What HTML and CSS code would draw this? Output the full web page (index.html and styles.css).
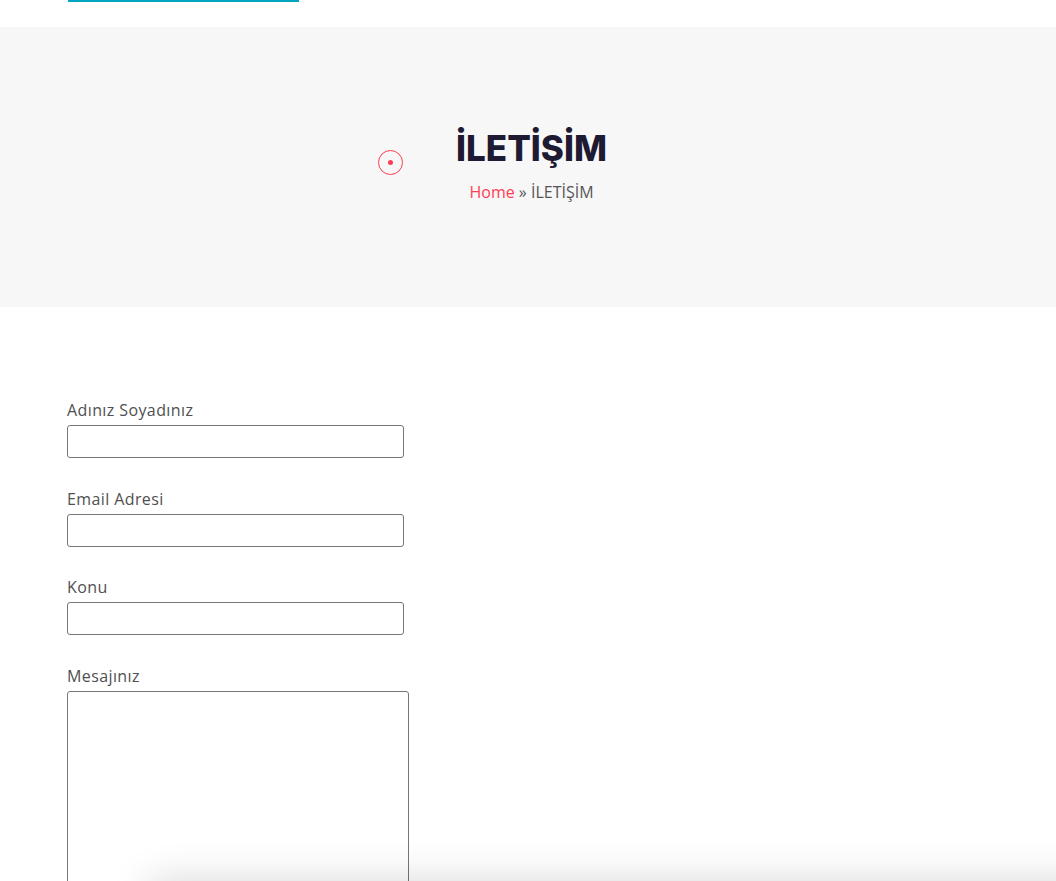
FILE: index.html
```html
<!DOCTYPE html>
<html lang="tr">
<head>
<meta charset="utf-8">
<title>İLETİŞİM</title>
<link rel="stylesheet" href="styles.css">
</head>
<body>
<header class="topbar">
  <div class="topbar-line"></div>
</header>
<section class="hero">
  <span class="hero-dot" aria-hidden="true"></span>
  <h1 class="hero-title">İLETİŞİM</h1>
  <nav class="crumbs"><a href="#" class="crumb-home">Home</a> » <span class="crumb-current">İLETİŞİM</span></nav>
</section>
<main class="content">
  <form class="contact-form">
    <div class="field">
      <label class="field-label" for="name">Adınız Soyadınız</label>
      <input class="field-input" id="name" type="text">
    </div>
    <div class="field">
      <label class="field-label" for="email">Email Adresi</label>
      <input class="field-input" id="email" type="email">
    </div>
    <div class="field">
      <label class="field-label" for="subject">Konu</label>
      <input class="field-input" id="subject" type="text">
    </div>
    <div class="field">
      <label class="field-label" for="message">Mesajınız</label>
      <textarea class="field-textarea" id="message"></textarea>
    </div>
  </form>
</main>
<div class="bottom-panel" aria-hidden="true"></div>
</body>
</html>
```
FILE: styles.css
```css
* { box-sizing: border-box; }
html, body { margin: 0; padding: 0; }
body {
  font-family: "Open Sans", "Noto Sans", sans-serif;
  background: #fff;
  color: #505050;
  overflow: hidden;
  height: 881px;
}
.topbar {
  height: 27px;
  padding-left: 68px;
}
.topbar-line {
  width: 231px;
  height: 2px;
  background: #03a5c0;
}
.hero {
  position: relative;
  height: 280px;
  background: #f7f7f7;
  display: flex;
  flex-direction: column;
  align-items: center;
  padding-top: 98px;
}
.hero-dot {
  position: absolute;
  left: 378px;
  top: 123px;
  width: 25px;
  height: 25px;
  border: 1.5px solid #ff3d52;
  border-radius: 50%;
}
.hero-dot::after {
  content: "";
  position: absolute;
  left: 50%;
  top: 50%;
  width: 5px;
  height: 5px;
  margin: -2.5px 0 0 -2.5px;
  border-radius: 50%;
  background: #ff3d52;
}
.hero-title {
  margin: 0 0 0 7px;
  font-family: "Inter", sans-serif;
  font-weight: 800;
  font-size: 35px;
  line-height: 46px;
  color: #1e1a33;
}
.crumbs {
  margin: 9px 0 0 7px;
  font-size: 16px;
  line-height: 24px;
  color: #555;
}
.crumb-home { color: #ff3d52; text-decoration: none; }
.crumb-current { color: #555; }
.content {
  padding: 91px 0 0 67px;
}
.contact-form {
  display: flex;
  flex-direction: column;
}
.field {
  display: flex;
  flex-direction: column;
  align-items: flex-start;
  margin-bottom: 28.5px;
}
.field-label {
  font-size: 16px;
  line-height: 24px;
  letter-spacing: 0.4px;
  color: #505050;
  margin-bottom: 3px;
}
.field-input {
  width: 337px;
  height: 33px;
  border: 1px solid #767676;
  border-radius: 3px;
  background: #fff;
  font: inherit;
}
.field-textarea {
  width: 342px;
  height: 230px;
  border: 1px solid #767676;
  border-radius: 3px;
  background: #fff;
  resize: none;
  font: inherit;
}
.bottom-panel {
  position: fixed;
  left: 150px;
  right: -40px;
  top: 881px;
  height: 80px;
  background: #fff;
  box-shadow: 0 0 40px rgba(0,0,0,0.16);
}
```
